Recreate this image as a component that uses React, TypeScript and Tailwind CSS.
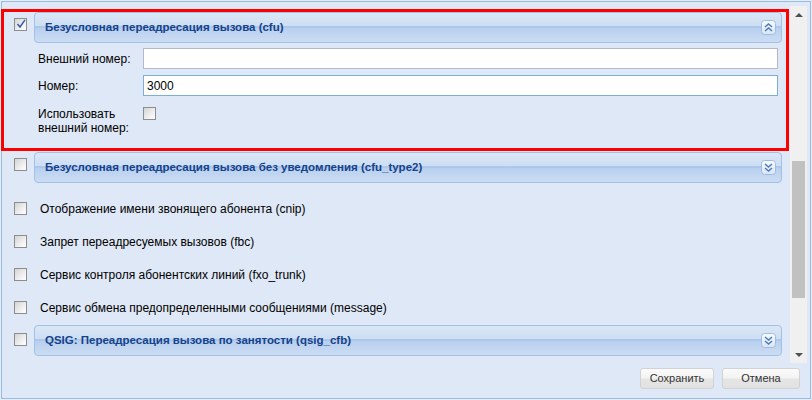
import React from 'react';

const headerBg =
  'bg-[linear-gradient(to_bottom,#dae7f6_0%,#cddef3_45%,#abc7ec_46%,#abc7ec_50%,#b8cfee_51%,#cbddf3_100%)]';

function CheckBox({ checked = false }: { checked?: boolean }) {
  return (
    <div className="relative h-[13px] w-[13px] shrink-0 border border-[#8d8d8d] bg-[linear-gradient(135deg,#d4d4d4_0%,#f4f4f4_70%,#ffffff_100%)]">
      {checked && (
        <svg className="absolute left-[1px] top-[0px]" width="10" height="10" viewBox="0 0 10 10">
          <path d="M1.5 5 L4 8 L9 0.8" fill="none" stroke="#3457a8" strokeWidth="1.4" />
        </svg>
      )}
    </div>
  );
}

function ToolIcon({ up }: { up: boolean }) {
  return (
    <svg width="15" height="15" viewBox="0 0 15 15">
      <defs>
        <linearGradient id={up ? 'tu' : 'td'} x1="0" y1="0" x2="0" y2="1">
          <stop offset="0" stopColor="#f7fafe" />
          <stop offset="1" stopColor="#d9e5f4" />
        </linearGradient>
      </defs>
      <rect x="0.5" y="0.5" width="14" height="14" rx="3" fill={`url(#${up ? 'tu' : 'td'})`} stroke="#9ebbe2" />
      {up ? (
        <path d="M4 7 L7.5 4 L11 7 M4 11 L7.5 8 L11 11" fill="none" stroke="#4c7cbc" strokeWidth="1.5" />
      ) : (
        <path d="M4 4 L7.5 7 L11 4 M4 8 L7.5 11 L11 8" fill="none" stroke="#4c7cbc" strokeWidth="1.5" />
      )}
    </svg>
  );
}

function PanelHeader({ title, expanded }: { title: string; expanded: boolean }) {
  return (
    <div
      className={`flex h-[31px] items-center justify-between rounded-[4px] border border-[#a3c0e6] pl-[10px] pr-[5px] ${headerBg}`}
    >
      <span className="text-[11.5px] font-bold text-[#15428b]">{title}</span>
      <ToolIcon up={expanded} />
    </div>
  );
}

function FieldSet({
  title,
  checked = false,
  expanded = false,
  cbTop = 'pt-[6px]',
  className = '',
  children,
}: {
  title: string;
  checked?: boolean;
  expanded?: boolean;
  cbTop?: string;
  className?: string;
  children?: React.ReactNode;
}) {
  return (
    <div className={`flex ${className}`}>
      <div className={`w-[32px] shrink-0 pl-[12px] ${cbTop}`}>
        <CheckBox checked={checked} />
      </div>
      <div className="mr-[8px] flex-1">
        <PanelHeader title={title} expanded={expanded} />
        {children}
      </div>
    </div>
  );
}

function CheckRow({ label }: { label: string }) {
  return (
    <div className="flex h-[33px] items-center pl-[12px]">
      <CheckBox />
      <span className="ml-[13px]">{label}</span>
    </div>
  );
}

function Button({ label, width }: { label: string; width: string }) {
  return (
    <button
      className={`${width} h-[21px] rounded-[3px] border border-[#d2d2d2] bg-[linear-gradient(to_bottom,#fbfbfb_0%,#f3f3f3_48%,#e5e5e5_52%,#e2e2e2_100%)] text-[11px] text-[#333]`}
    >
      {label}
    </button>
  );
}

export default function App() {
  return (
    <div className="relative h-[400px] w-[812px] bg-[#e6edf7] p-px font-['Liberation_Sans',Arial,sans-serif] text-[12px] text-black">
      <div className="flex h-full flex-col border border-[#99bbe8] bg-[#dfe8f6]">
        {/* Scroll area */}
        <div className="mt-[4px] flex h-[357px] pr-[3px]">
          <div className="flex-1 overflow-hidden">
            <FieldSet
              title="Безусловная переадресация вызова (cfu)"
              checked
              expanded
              className="mt-[6px]"
            >
              <div className="pb-[11px] pl-[4px] pr-[4px] pt-[5px]">
                <div className="flex h-[21px] items-center">
                  <label className="w-[105px] shrink-0">Внешний номер:</label>
                  <input
                    className="h-[21px] flex-1 border border-[#b5b8c8] bg-white px-[3px] text-[12px] outline-none"
                    defaultValue=""
                  />
                </div>
                <div className="mt-[6px] flex h-[21px] items-center">
                  <label className="w-[105px] shrink-0">Номер:</label>
                  <input
                    className="h-[21px] flex-1 border border-[#7eadd9] bg-white px-[3px] text-[12px] outline-none"
                    defaultValue="3000"
                  />
                </div>
                <div className="mt-[11px] flex">
                  <label className="w-[105px] shrink-0 leading-[14px]">
                    Использовать
                    <br />
                    внешний номер:
                  </label>
                  <CheckBox />
                </div>
              </div>
            </FieldSet>

            <FieldSet
              title="Безусловная переадресация вызова без уведомления (cfu_type2)"
              className="mt-[6px]"
            />

            <div className="mt-[9px]">
              <CheckRow label="Отображение имени звонящего абонента (cnip)" />
              <CheckRow label="Запрет переадресуемых вызовов (fbc)" />
              <CheckRow label="Сервис контроля абонентских линий (fxo_trunk)" />
              <CheckRow label="Сервис обмена предопределенными сообщениями (message)" />
            </div>

            <FieldSet
              title="QSIG: Переадресация вызова по занятости (qsig_cfb)"
              cbTop="pt-[8px]"
              className="mt-[1px]"
            />
          </div>

          {/* Scrollbar */}
          <div className="flex w-[17px] shrink-0 flex-col bg-[#f0f0f0]">
            <div className="flex h-[17px] items-center justify-center">
              <svg width="8" height="4" viewBox="0 0 8 4">
                <path d="M0 4 L4 0 L8 4 Z" fill="#505050" />
              </svg>
            </div>
            <div className="mx-[2px] mt-[138px] h-[137px] bg-[#c1c1c1]" />
            <div className="flex-1" />
            <div className="flex h-[17px] items-center justify-center">
              <svg width="8" height="4" viewBox="0 0 8 4">
                <path d="M0 0 L8 0 L4 4 Z" fill="#505050" />
              </svg>
            </div>
          </div>
        </div>

        {/* Buttons */}
        <div className="mt-[5px] flex justify-end gap-[8px] pr-[10px]">
          <Button label="Сохранить" width="w-[74px]" />
          <Button label="Отмена" width="w-[78px]" />
        </div>
      </div>

      {/* Annotation box */}
      <div className="pointer-events-none absolute left-[1px] top-[9px] h-[142px] w-[788px] border-[3px] border-[#ff0000]" />
    </div>
  );
}
